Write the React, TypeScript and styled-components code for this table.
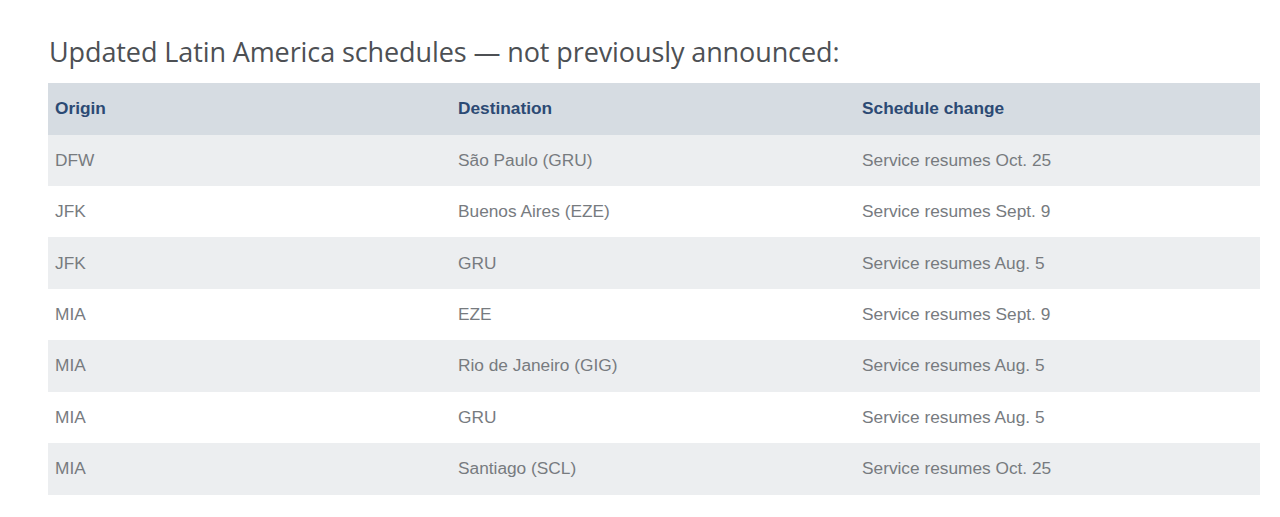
import styled, { createGlobalStyle } from 'styled-components';

const GlobalStyle = createGlobalStyle`
  html, body {
    margin: 0;
    padding: 0;
    background: #ffffff;
  }
`;

const Page = styled.div`
  padding: 33px 20px 0 48px;
`;

const Title = styled.h2`
  margin: 0 0 12px 1px;
  font-family: 'Open Sans', sans-serif;
  font-weight: 400;
  font-size: 27px;
  line-height: 38px;
  color: #4d5054;
  letter-spacing: -0.1px;
`;

const Table = styled.table`
  width: 1212px;
  border-collapse: collapse;
  table-layout: fixed;
  font-family: 'Liberation Sans', Arial, sans-serif;
  font-size: 17.3px;
`;

const HeadCell = styled.th`
  text-align: left;
  height: 51.5px;
  padding: 0 7px;
  background: #d6dce2;
  color: #2c4a74;
  font-weight: 700;
`;

const Row = styled.tr<{ $striped: boolean }>`
  background: ${({ $striped }) => ($striped ? '#eceef0' : '#ffffff')};
`;

const Cell = styled.td`
  height: 51.45px;
  padding: 0 7px;
  color: #777b7f;
`;

const rows = [
  ['DFW', 'São Paulo (GRU)', 'Service resumes Oct. 25'],
  ['JFK', 'Buenos Aires (EZE)', 'Service resumes Sept. 9'],
  ['JFK', 'GRU', 'Service resumes Aug. 5'],
  ['MIA', 'EZE', 'Service resumes Sept. 9'],
  ['MIA', 'Rio de Janeiro (GIG)', 'Service resumes Aug. 5'],
  ['MIA', 'GRU', 'Service resumes Aug. 5'],
  ['MIA', 'Santiago (SCL)', 'Service resumes Oct. 25'],
];

export default function App() {
  return (
    <>
      <GlobalStyle />
      <Page>
        <Title>Updated Latin America schedules — not previously announced:</Title>
        <Table>
          <colgroup>
            <col style={{ width: 403 }} />
            <col style={{ width: 404 }} />
            <col />
          </colgroup>
          <thead>
            <tr>
              <HeadCell>Origin</HeadCell>
              <HeadCell>Destination</HeadCell>
              <HeadCell>Schedule change</HeadCell>
            </tr>
          </thead>
          <tbody>
            {rows.map((r, i) => (
              <Row key={i} $striped={i % 2 === 0}>
                <Cell>{r[0]}</Cell>
                <Cell>{r[1]}</Cell>
                <Cell>{r[2]}</Cell>
              </Row>
            ))}
          </tbody>
        </Table>
      </Page>
    </>
  );
}
